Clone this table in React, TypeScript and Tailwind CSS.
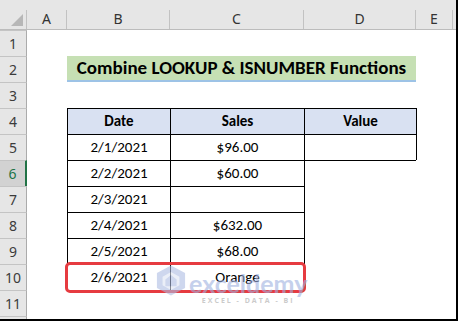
import React from 'react';

const colWidths = ['w-[40px]', 'w-[103px]', 'w-[134px]', 'w-[112px]', 'w-[37px]'];
const colLetters = ['A', 'B', 'C', 'D', 'E'];

const rows = [
  { date: '2/1/2021', sales: '$96.00' },
  { date: '2/2/2021', sales: '$60.00' },
  { date: '2/3/2021', sales: '' },
  { date: '2/4/2021', sales: '$632.00' },
  { date: '2/5/2021', sales: '$68.00' },
  { date: '2/6/2021', sales: 'Orange' },
];

const cellFont = { fontFamily: 'Calibri, Carlito, Lato, "Liberation Sans", sans-serif' };
const uiFont = { fontFamily: '"Segoe UI", "Noto Sans", "Open Sans", sans-serif' };

const RowHead = ({ n, selected }: { n?: number; selected?: boolean }) => (
  <div
    style={uiFont}
    className={
      selected
        ? 'w-[27px] shrink-0 flex items-center justify-center bg-[#d2d2d2] border-t border-t-[#c4c4c4] border-r-2 border-r-[#217346] text-[14px] text-[#217346]'
        : 'w-[27px] shrink-0 flex items-center justify-center bg-[#e6e6e6] border-t border-t-[#c4c4c4] border-r border-r-[#ababab] text-[14px] text-[#3b3b3b]'
    }
  >
    {n}
  </div>
);

const Row = ({ children, n, selected }: { children?: React.ReactNode; n: number; selected?: boolean }) => (
  <div className="flex h-[26px] shrink-0">
    <RowHead n={n} selected={selected} />
    {children}
  </div>
);

export default function App() {
  return (
    <div
      className="relative w-[458px] h-[321px] overflow-hidden bg-white border-r-2 border-b-2 border-black flex flex-col"
      style={cellFont}
    >
      {/* column headers */}
      <div className="flex h-[30px] shrink-0 bg-[#e6e6e6] border-b border-[#bcbcbc]" style={uiFont}>
        <div className="w-[27px] shrink-0 flex">
          <div className="flex-1 flex items-end justify-end pb-[3px] pr-[3px]">
            <svg width="12" height="12" viewBox="0 0 12 12">
              <polygon points="12,0 12,12 0,12" fill="#b7b7b7" />
            </svg>
          </div>
          <div className="w-px h-[19px] self-end bg-[#c2c2c2]" />
        </div>
        {colLetters.map((l, i) => (
          <div key={l} className={`${colWidths[i]} shrink-0 flex`}>
            <div className="flex-1 flex items-center justify-center pt-[8px] text-[14px] text-[#333]">{l}</div>
            <div className="w-px h-[19px] self-end bg-[#c2c2c2]" />
          </div>
        ))}
        <div className="flex-1" />
      </div>

      {/* row 1 */}
      <Row n={1} />

      {/* row 2 - title */}
      <Row n={2}>
        <div className="w-[40px] shrink-0" />
        <div className="w-[349px] shrink-0 flex items-center justify-center bg-[#c6e0b4] border-b-2 border-[#9dc3e6] text-[19px] font-bold text-black">
          Combine LOOKUP &amp; ISNUMBER Functions
        </div>
      </Row>

      {/* row 3 */}
      <Row n={3} />

      {/* row 4 - headers */}
      <Row n={4}>
        <div className="w-[40px] shrink-0" />
        <div className="w-[103px] shrink-0 flex items-center justify-center bg-[#d9e1f2] border-t border-l border-black text-[15px] font-bold">
          Date
        </div>
        <div className="w-[134px] shrink-0 flex items-center justify-center bg-[#d9e1f2] border-t border-l border-black text-[15px] font-bold">
          Sales
        </div>
        <div className="w-[112px] shrink-0 flex items-center justify-center bg-[#d9e1f2] border-t border-l border-black text-[15px] font-bold">
          Value
        </div>
        <div className="w-[37px] shrink-0 border-l border-black" />
      </Row>

      {rows.map((r, i) => (
        <Row key={r.date} n={i + 5} selected={i === 1}>
          <div className="w-[40px] shrink-0" />
          <div className="w-[103px] shrink-0 flex items-center justify-center border-t border-l border-black text-[15px]">
            {r.date}
          </div>
          <div className="w-[134px] shrink-0 flex items-center justify-center border-t border-l border-black text-[15px]">
            {r.sales}
          </div>
          <div
            className={
              i < 2
                ? 'w-[112px] shrink-0 border-t border-l border-black'
                : 'w-[112px] shrink-0 border-l border-black'
            }
          />
          {i === 0 && <div className="w-[37px] shrink-0 border-l border-black" />}
        </Row>
      ))}

      {/* row 11 */}
      <Row n={11}>
        <div className="w-[40px] shrink-0" />
        <div className="w-[103px] shrink-0 border-t border-black" />
        <div className="w-[134px] shrink-0 border-t border-black" />
      </Row>

      {/* row 12 (partial) */}
      <div className="flex flex-1">
        <RowHead />
      </div>

      {/* red highlight on row 10 */}
      <div className="absolute left-[65px] top-[262px] w-[241px] h-[31px] rounded-[5px] border-[3px] border-[#e63b40]" />

      {/* watermark */}
      <div className="absolute left-[156px] top-[264px] flex items-start gap-[3px] opacity-60 pointer-events-none">
        <svg width="30" height="33" viewBox="0 0 32 34">
          <polygon points="16,1 31,9 31,25 16,33 1,25 1,9" fill="#aebde3" />
          <polygon points="16,8 25,13 25,22 16,27 7,22 7,13" fill="#dfe6f5" />
          <polygon points="10,16 16,11 22,16 22,23 10,23" fill="#aebde3" />
        </svg>
        <div className="flex flex-col items-center pt-[8px]">
          <div className="text-[25px] leading-[22px] font-bold text-[#9fb1e0]" style={{ fontFamily: 'Lato, "Open Sans", sans-serif' }}>
            exceldemy
          </div>
          <div className="text-[7px] leading-[9px] tracking-[2px] font-bold text-[#a9a9a9] mt-[2px]" style={{ fontFamily: '"Open Sans", "Noto Sans", sans-serif' }}>
            EXCEL - DATA - BI
          </div>
        </div>
      </div>
    </div>
  );
}
